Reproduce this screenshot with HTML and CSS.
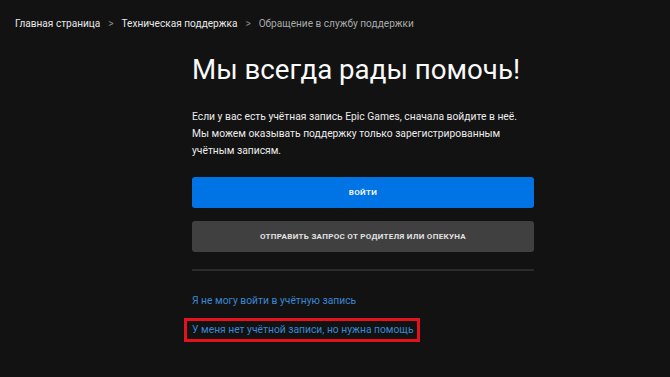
FILE: index.html
```html
<!DOCTYPE html>
<html lang="ru">
<head>
    <meta charset="utf-8">
    <title>Обращение в службу поддержки</title>
    <link rel="stylesheet" href="styles.css">
</head>
<body>
<nav class="crumbs">
    <a class="crumb" href="#">Главная страница</a>
    <span class="sep">&gt;</span>
    <a class="crumb" href="#">Техническая поддержка</a>
    <span class="sep">&gt;</span>
    <span class="crumb current">Обращение в службу поддержки</span>
</nav>

<main class="help">
    <h1>Мы всегда рады помочь!</h1>
    <p class="intro">Если у вас есть учётная запись Epic Games, сначала войдите в неё. Мы можем оказывать поддержку только зарегистрированным учётным записям.</p>

    <div class="actions">
        <button class="btn primary">Войти</button>
        <button class="btn secondary">Отправить запрос от родителя или опекуна</button>
    </div>

    <hr class="divider">

    <div class="links">
        <a class="link" href="#">Я не могу войти в учётную запись</a>
        <a class="link marked" href="#">У меня нет учётной записи, но нужна помощь</a>
    </div>
</main>
</body>
</html>
```

FILE: styles.css
```css
body {
    margin: 0;
    background-color: #121212;
    font-family: Roboto, "Liberation Sans", sans-serif;
    color: #f5f5f5;
}

a {
    text-decoration: none;
}

.crumbs {
    display: flex;
    align-items: center;
    gap: 8px;
    padding: 16px 15px 0;
    font-size: 10.1px;
    line-height: 16px;
}

.crumb {
    color: #e8e8e8;
}

.crumb.current {
    color: #a8a8a8;
}

.sep {
    color: #8a8a8a;
}

.help {
    width: 342px;
    margin-left: 192px;
}

h1 {
    margin: 21px 0 0;
    font-size: 27.7px;
    font-weight: 400;
    line-height: 34px;
    white-space: nowrap;
    color: #fafafa;
}

.intro {
    margin: 21px 0 0;
    font-size: 10.3px;
    line-height: 17px;
    color: #ececec;
}

.actions {
    display: flex;
    flex-direction: column;
    gap: 13px;
    margin-top: 18px;
}

.btn {
    height: 31px;
    border: none;
    border-radius: 3px;
    font-family: inherit;
    font-size: 8px;
    font-weight: 700;
    letter-spacing: .3px;
    text-transform: uppercase;
    cursor: pointer;
}

.btn.primary {
    background: #0074e4;
    color: #f2f6fb;
}

.btn.secondary {
    background: #404040;
    color: #e2e2e2;
}

.divider {
    height: 2px;
    margin: 17px 0 0;
    border: none;
    background: #2a2a2a;
}

.links {
    display: flex;
    flex-direction: column;
    align-items: flex-start;
    gap: 9px;
    margin-top: 21px;
}

.link {
    font-size: 10.3px;
    line-height: 17px;
    color: #3a88d2;
}

.link.marked {
    margin-left: -8px;
    padding: 0 4px 0 5px;
    line-height: 18px;
    border: 3px solid #e3121d;
}
```
